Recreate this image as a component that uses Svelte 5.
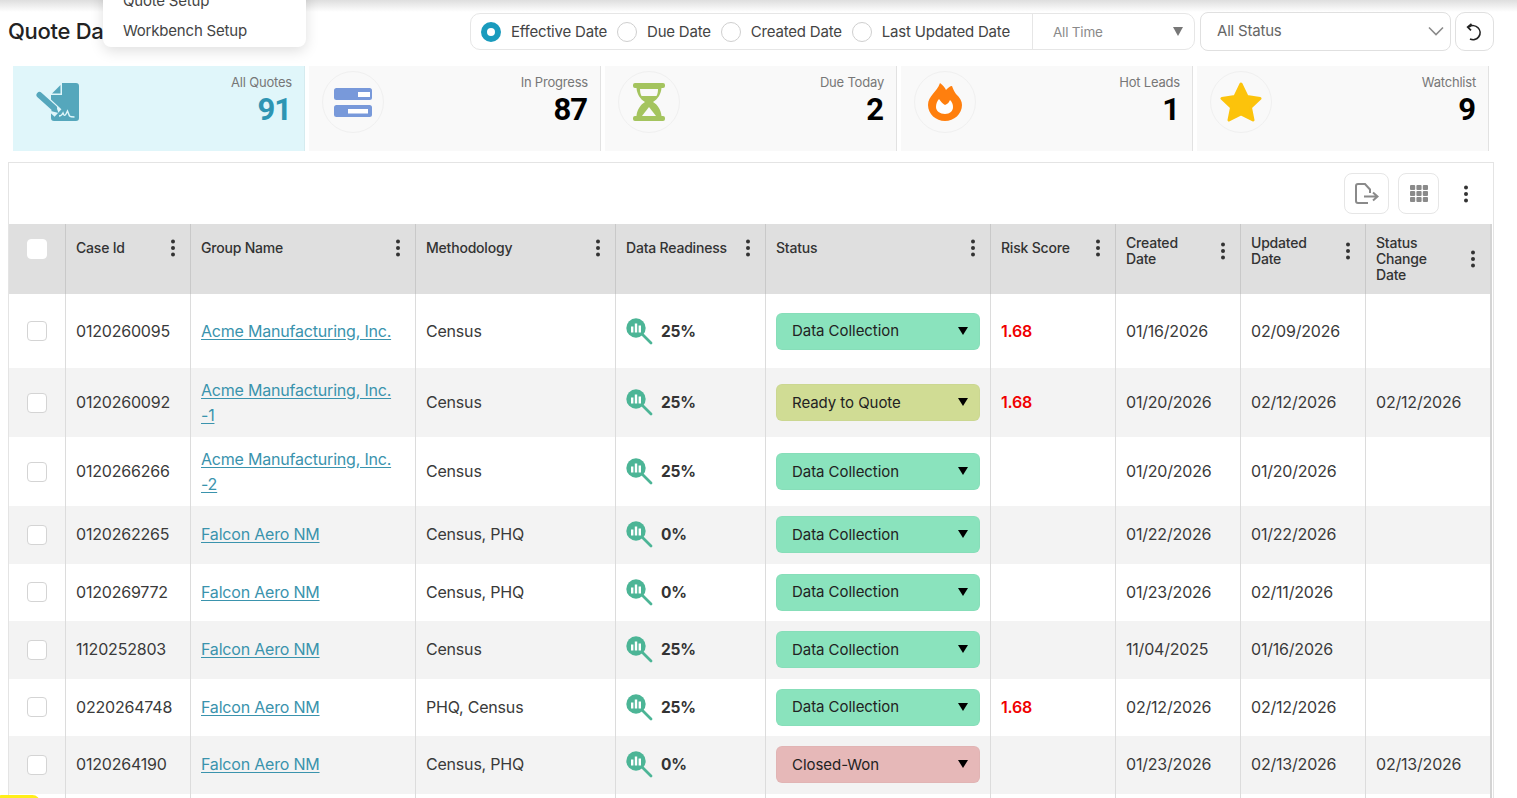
<script>
  const dateOptions = [
    { label: 'Effective Date', on: true },
    { label: 'Due Date', on: false },
    { label: 'Created Date', on: false },
    { label: 'Last Updated Date', on: false }
  ];
  const stats = [
    { label: 'All Quotes', value: '91', icon: 'doc', active: true },
    { label: 'In Progress', value: '87', icon: 'bars' },
    { label: 'Due Today', value: '2', icon: 'glass' },
    { label: 'Hot Leads', value: '1', icon: 'flame' },
    { label: 'Watchlist', value: '9', icon: 'star' }
  ];
  const cols = [
    { label: 'Case Id', c: 'c-nowrap' },
    { label: 'Group Name', c: 'c-nowrap' },
    { label: 'Methodology', c: 'c-nowrap' },
    { label: 'Data Readiness', c: 'c-nowrap' },
    { label: 'Status', c: 'c-nowrap' },
    { label: 'Risk Score', c: 'c-nowrap' },
    { label: 'Created Date', c: 'c-date' },
    { label: 'Updated Date', c: 'c-date' },
    { label: 'Status Change Date', c: 'c-date' }
  ];
  const rows = [
    { id: '0120260095', group: 'Acme Manufacturing, Inc.', meth: 'Census', ready: '25%', status: 'Data Collection', risk: '1.68', created: '01/16/2026', updated: '02/09/2026', changed: '', h: 'h-first' },
    { id: '0120260092', group: 'Acme Manufacturing, Inc. -1', meth: 'Census', ready: '25%', status: 'Ready to Quote', risk: '1.68', created: '01/20/2026', updated: '02/12/2026', changed: '02/12/2026', h: 'h-two' },
    { id: '0120266266', group: 'Acme Manufacturing, Inc. -2', meth: 'Census', ready: '25%', status: 'Data Collection', risk: '', created: '01/20/2026', updated: '01/20/2026', changed: '', h: 'h-two' },
    { id: '0120262265', group: 'Falcon Aero NM', meth: 'Census, PHQ', ready: '0%', status: 'Data Collection', risk: '', created: '01/22/2026', updated: '01/22/2026', changed: '', h: 'h-one' },
    { id: '0120269772', group: 'Falcon Aero NM', meth: 'Census, PHQ', ready: '0%', status: 'Data Collection', risk: '', created: '01/23/2026', updated: '02/11/2026', changed: '', h: 'h-one' },
    { id: '1120252803', group: 'Falcon Aero NM', meth: 'Census', ready: '25%', status: 'Data Collection', risk: '', created: '11/04/2025', updated: '01/16/2026', changed: '', h: 'h-one' },
    { id: '0220264748', group: 'Falcon Aero NM', meth: 'PHQ, Census', ready: '25%', status: 'Data Collection', risk: '1.68', created: '02/12/2026', updated: '02/12/2026', changed: '', h: 'h-one' },
    { id: '0120264190', group: 'Falcon Aero NM', meth: 'Census, PHQ', ready: '0%', status: 'Closed-Won', risk: '', created: '01/23/2026', updated: '02/13/2026', changed: '02/13/2026', h: 'h-one' }
  ];
  const statusClass = { 'Data Collection': 's-data', 'Ready to Quote': 's-ready', 'Closed-Won': 's-won' };
</script>

{#snippet kebab()}
  <svg class="kebab" viewBox="0 0 6 20" width="6" height="20" aria-hidden="true">
    <circle cx="3" cy="3.500" r="2" /><circle cx="3" cy="10" r="2" /><circle cx="3" cy="16.500" r="2" />
  </svg>
{/snippet}

{#snippet statIcon(name)}
  {#if name === 'doc'}
    <svg viewBox="14 10 44 44" width="44" height="44" aria-hidden="true">
      <path fill="#55a7bc" d="M41 13H55a3 3 0 0 1 3 3V48a3 3 0 0 1-3 3H33a3 3 0 0 1-3-3V25H41Z" />
      <path fill="#55a7bc" d="M39.500 15V23.500H31Z" />
      <path fill="none" stroke="#e0f6fa" stroke-width="10" d="M22 29 37 43" />
      <path fill="none" stroke="#55a7bc" stroke-width="6" stroke-linecap="round" d="M18.500 25 33 38" />
      <path fill="#55a7bc" d="M30 41 37.500 43 35 36Z" />
      <path fill="none" stroke="#e0f6fa" stroke-width="1.400" d="M38 46c2 0 3-1 4-3 1 3 2 3 3 1l1.500-3 2 5c1 1 3 1 5 1" />
    </svg>
  {:else if name === 'bars'}
    <svg viewBox="0 0 38 29" width="38" height="29" aria-hidden="true">
      <rect width="38" height="12" rx="2.500" fill="#7899da" />
      <rect y="17" width="38" height="12" rx="2.500" fill="#7899da" />
      <rect x="24" y="4" width="12" height="5" fill="#fff" />
      <rect x="14" y="21" width="20" height="4.500" fill="#fff" />
    </svg>
  {:else if name === 'glass'}
    <svg viewBox="0 0 32 38" width="32" height="38" aria-hidden="true">
      <path fill="#a4c45e" d="M2 0H30a2 2 0 0 1 2 2V3a2 2 0 0 1-2 2H28.500C28 11 25 16 20 19 25 22 28 27 28.500 33H30a2 2 0 0 1 2 2V36a2 2 0 0 1-2 2H2a2 2 0 0 1-2-2V35a2 2 0 0 1 2-2H3.500C4 27 7 22 12 19 7 16 4 11 3.500 5H2a2 2 0 0 1-2-2V2A2 2 0 0 1 2 0Z" />
      <path fill="#f9f9f9" d="M7 6H25C25 9 24.500 11 23.500 13H8.500C7.500 11 7 9 7 6Z" />
      <path fill="#f9f9f9" d="M16 24 23 33H9Z" />
    </svg>
  {:else if name === 'flame'}
    <svg viewBox="0 0 34 38" width="34" height="38" aria-hidden="true">
      <path fill="#ff7f0e" d="M12 0C15 2 17 5 18 7 20 5 22 3 24 3 25 6 26 8 28 11 32 15 34 18 34 22 34 31 26 38 17 38 8 38 0 31 0 22 0 13 9 9 12 0Z" />
      <path fill="#fff" d="M11 16C13 19 15 21 17 22 20 21 21 19 22 17 24 19 25 21 25 24 25 28 22 31 17 31 12 31 8 28 8 24 8 21 9 18 11 16Z" />
    </svg>
  {:else}
    <svg viewBox="0 0 42 40" width="42" height="40" aria-hidden="true">
      <path fill="#fcc30b" stroke="#fcc30b" stroke-width="3" stroke-linejoin="round" d="M21 2 27 14.500 40 16.500 30.500 25.500 33 38 21 32 9 38 11.500 25.500 2 16.500 15 14.500Z" />
    </svg>
  {/if}
{/snippet}

<div class="page">
  <div class="top-shadow"></div>

  <header class="head">
    <h1>Quote Dashboard</h1>
    <div class="menu">
      <div class="menu-item">Quote Setup</div>
      <div class="menu-item">Workbench Setup</div>
    </div>
    <div class="filters">
      <div class="date-box">
        {#each dateOptions as o}
          <span class="radio-opt">
            <span class="radio" class:on={o.on}></span>{o.label}
          </span>
        {/each}
        <div class="time">
          <span>All Time</span>
          <svg viewBox="0 0 10 9" width="10" height="9" aria-hidden="true"><path d="M0 0H10L5 9Z" fill="#777" /></svg>
        </div>
      </div>
      <div class="status-box">
        <span>All Status</span>
        <svg viewBox="0 0 16 10" width="16" height="10" aria-hidden="true"><path d="M1 1.500 8 8.500 15 1.500" fill="none" stroke="#8a8a8a" stroke-width="1.600" /></svg>
      </div>
      <button class="reset" aria-label="Reset">
        <svg viewBox="10 9 20 20" width="20" height="20" aria-hidden="true" fill="none" stroke="#222" stroke-width="1.700">
          <path d="M14 14A7 7 0 1 1 15 26" />
          <path d="M16.500 10.800 12.700 14 16 17.300" />
        </svg>
      </button>
    </div>
  </header>

  <section class="stats">
    {#each stats as s}
      <div class="stat" class:active={s.active}>
        <div class="circle">{@render statIcon(s.icon)}</div>
        <div class="stat-text">
          <div class="stat-label">{s.label}</div>
          <div class="stat-value">{s.value}</div>
        </div>
      </div>
    {/each}
  </section>

  <section class="card">
    <div class="toolbar">
      <button class="tool wide" aria-label="Export">
        <svg viewBox="0 0 24 21" width="24" height="21" aria-hidden="true" fill="none" stroke="#8a8a8a" stroke-width="2">
          <path d="M13 20H3a2 2 0 0 1-2-2V3a2 2 0 0 1 2-2H10L15 6.500V10" />
          <path d="M9 13.500H22M18 9.500 22.500 13.500 18 17.500" />
        </svg>
      </button>
      <button class="tool" aria-label="Columns">
        <svg viewBox="0 0 18 17" width="18" height="17" aria-hidden="true" fill="#8a8a8a">
          <rect width="5.200" height="5" rx="1" /><rect x="6.400" width="5.200" height="5" rx="1" /><rect x="12.800" width="5.200" height="5" rx="1" />
          <rect y="6" width="5.200" height="5" rx="1" /><rect x="6.400" y="6" width="5.200" height="5" rx="1" /><rect x="12.800" y="6" width="5.200" height="5" rx="1" />
          <rect y="12" width="5.200" height="5" rx="1" /><rect x="6.400" y="12" width="5.200" height="5" rx="1" /><rect x="12.800" y="12" width="5.200" height="5" rx="1" />
        </svg>
      </button>
      <span class="tool-more">{@render kebab()}</span>
    </div>

    <table>
      <colgroup>
        <col class="w-check" /><col class="w-125" /><col class="w-225" /><col class="w-200" /><col class="w-150" /><col class="w-225" /><col class="w-125" /><col class="w-125" /><col class="w-125" /><col class="w-last" />
      </colgroup>
      <thead>
        <tr>
          <th class="check-h"><span class="box head-box"></span></th>
          {#each cols as c}
            <th><div class="th-in"><span class={c.c}>{c.label}</span>{@render kebab()}</div></th>
          {/each}
        </tr>
      </thead>
      <tbody>
        {#each rows as r, i}
          <tr class={r.h} class:alt={i % 2 === 1}>
            <td class="check"><span class="box"></span></td>
            <td>{r.id}</td>
            <td><a href="#top">{r.group}</a></td>
            <td>{r.meth}</td>
            <td>
              <div class="ready">
                <svg viewBox="0 0 27 27" width="27" height="27" aria-hidden="true">
                  <circle cx="10" cy="10" r="9.700" fill="#4cb596" />
                  <path d="M16.500 16.500 25 25" stroke="#4cb596" stroke-width="2.800" stroke-linecap="round" />
                  <rect x="5" y="8.500" width="2.400" height="6" fill="#fff" /><rect x="8.800" y="5.500" width="2.400" height="9" fill="#fff" /><rect x="12.600" y="7.500" width="2.400" height="7" fill="#fff" />
                </svg>
                <b>{r.ready}</b>
              </div>
            </td>
            <td>
              <div class="status {statusClass[r.status]}">
                <span>{r.status}</span>
                <svg viewBox="0 0 10 8" width="10" height="8" aria-hidden="true"><path d="M0 0H10L5 8Z" fill="#000" /></svg>
              </div>
            </td>
            <td class="risk">{r.risk}</td>
            <td>{r.created}</td>
            <td>{r.updated}</td>
            <td>{r.changed}</td>
          </tr>
        {/each}
        <tr class="h-one">
          {#each Array(10) as _}<td></td>{/each}
        </tr>
      </tbody>
    </table>
  </section>

  <div class="yellow"></div>
</div>

<style>
  :global(body) { margin: 0; background: #fff; }
  .page {
    position: relative;
    width: 1517px;
    height: 798px;
    overflow: hidden;
    background: #fff;
    font-family: Inter, "Noto Sans", "Liberation Sans", sans-serif;
    color: #333;
  }
  .top-shadow {
    height: 12px;
    background: linear-gradient(#dedede, #fff);
  }
  .head {
    position: relative;
    display: flex;
    align-items: center;
    justify-content: space-between;
    height: 39px;
    padding: 0 23px 0 8px;
  }
  h1 {
    margin: 0 0 2px;
    font-size: 22px;
    line-height: 36px;
    font-weight: 500;
    color: #222;
    letter-spacing: -0.3px;
  }
  .menu {
    position: absolute;
    left: 103px;
    top: -42px;
    width: 203px;
    height: 77px;
    box-sizing: border-box;
    padding-top: 16px;
    background: #fff;
    border-radius: 0 0 8px 8px;
    box-shadow: 0 4px 14px rgba(0, 0, 0, 0.13);
    font-size: 15px;
    color: #444;
    overflow: hidden;
  }
  .menu-item { padding: 0 20px; line-height: 30px; letter-spacing: -0.2px; white-space: nowrap; }
  .filters { display: flex; gap: 5px; align-items: center; }
  .date-box {
    display: flex;
    align-items: center;
    width: 725px;
    height: 37px;
    box-sizing: border-box;
    border: 1px solid #e6e6e6;
    border-radius: 10px;
    padding-left: 10px;
    font-size: 15px;
    letter-spacing: -0.2px;
    color: #444;
  }
  .radio-opt { display: inline-flex; align-items: center; gap: 10px; margin-right: 10px; white-space: nowrap; }
  .radio {
    width: 20px;
    height: 20px;
    box-sizing: border-box;
    border: 1px solid #cfcfcf;
    border-radius: 50%;
    background: #fff;
  }
  .radio.on { border: 6px solid #1a9bbd; }
  .time {
    margin-left: auto;
    align-self: stretch;
    width: 162px;
    box-sizing: border-box;
    border-left: 1px solid #e6e6e6;
    display: flex;
    align-items: center;
    justify-content: space-between;
    padding: 0 11px 0 20px;
    color: #8a8a8a;
    font-size: 13.500px;
  }
  .status-box {
    width: 251px;
    height: 39px;
    box-sizing: border-box;
    border: 1px solid #e0e0e0;
    border-radius: 8px;
    display: flex;
    align-items: center;
    justify-content: space-between;
    padding: 0 6px 2px 16px;
    font-size: 15px;
    color: #666;
    letter-spacing: -0.2px;
  }
  .reset {
    width: 39px;
    height: 39px;
    margin-left: -1px;
    padding: 0;
    border: 1px solid #e0e0e0;
    border-radius: 10px;
    background: #fff;
    display: flex;
    align-items: center;
    justify-content: center;
  }
  .stats {
    display: flex;
    gap: 4px;
    margin: 15px 0 0 13px;
  }
  .stat {
    width: 292px;
    height: 85px;
    box-sizing: border-box;
    background: #f9f9f9;
    border-right: 1px solid #e2e2e2;
    display: flex;
    justify-content: space-between;
    padding: 5px 12px 0 13px;
  }
  .stat.active { background: #e0f6fa; border-right-color: #d5ebef; }
  .circle {
    width: 62px;
    height: 62px;
    box-sizing: border-box;
    border: 1px solid #f0f0f0;
    border-radius: 50%;
    display: flex;
    align-items: center;
    justify-content: center;
  }
  .active .circle { border-color: transparent; }
  .stat-text { text-align: right; padding-top: 3px; }
  .stat-label { font-size: 13px; line-height: 16px; color: #777; letter-spacing: -0.2px; }
  .stat-value {
    font-family: Roboto, "Liberation Sans", sans-serif;
    font-size: 31px;
    line-height: 37px;
    padding: 1px 1px 0 0;
    font-weight: 700;
    color: #000;
    letter-spacing: -1px;
  }
  .active .stat-value { color: #2e95b3; }
  .card {
    margin: 11px 23px 0 8px;
    border: 1px solid #e4e4e4;
    border-bottom: none;
    background: #fff;
  }
  .toolbar {
    height: 61px;
    display: flex;
    align-items: center;
    justify-content: flex-end;
    padding-right: 24px;
  }
  .tool {
    width: 41px;
    height: 41px;
    margin-right: 9px;
    padding: 0;
    background: #fff;
    border: 1px solid #e6e6e6;
    border-radius: 8px;
    display: flex;
    align-items: center;
    justify-content: center;
  }
  .tool.wide { width: 45px; }
  .tool-more { margin-left: 15px; display: flex; }
  table {
    width: 1483px;
    table-layout: fixed;
    border-collapse: separate;
    border-spacing: 0;
    font-size: 16px;
    letter-spacing: -0.2px;
    border-right: 2px solid #d4d4d4;
  }
  .w-check { width: 57px; }
  .w-125 { width: 125px; }
  .w-225 { width: 225px; }
  .w-200 { width: 200px; }
  .w-150 { width: 150px; }
  .w-last { width: 124px; }
  th {
    height: 70px;
    box-sizing: border-box;
    padding: 11px 14px 0 10px;
    vertical-align: top;
    text-align: left;
    background: #dfdfdf;
    border-right: 1px solid #c9c9c9;
    font-size: 14px;
    font-weight: 500;
    line-height: 16px;
    color: #333;
  }
  th:last-child { border-right: none; }
  .check-h { padding: 15px 0 0; text-align: center; }
  .th-in {
    display: flex;
    align-items: center;
    justify-content: space-between;
    min-height: 26px;
  }
  .c-nowrap { white-space: nowrap; }
  .c-date { max-width: 62px; }
  .kebab { fill: #333; flex: none; }
  td {
    box-sizing: border-box;
    padding: 0 10px;
    border-right: 1px solid #dcdcdc;
    line-height: 25px;
    color: #3a3a3a;
    vertical-align: middle;
  }
  td:last-child { border-right: none; }
  .h-first td { height: 74px; }
  .h-two td { height: 69px; }
  .h-one td { height: 57.500px; }
  .alt td { background: #f3f3f3; }
  .check { padding: 0; text-align: center; }
  .box {
    display: inline-block;
    width: 20px;
    height: 20px;
    margin-bottom: 2px;
    box-sizing: border-box;
    vertical-align: middle;
    background: #fff;
    border: 1px solid #d4d4d4;
    border-radius: 4px;
  }
  .head-box { border-color: #fff; }
  a { color: #3a93ad; text-decoration: underline; text-underline-offset: 2px; }
  .ready { display: flex; align-items: center; gap: 8px; }
  .ready svg { flex: none; }
  .ready b { font-size: 15.500px; font-weight: 700; color: #333; }
  .status {
    width: 204px;
    height: 37px;
    box-sizing: border-box;
    border-radius: 6px;
    border: 1px solid rgba(0, 0, 0, 0.02);
    display: flex;
    align-items: center;
    justify-content: space-between;
    padding: 0 11px 1px 15px;
    font-size: 15px;
    letter-spacing: -0.05px;
    color: #222;
  }
  .s-data { background: #8ae3bd; }
  .s-ready { background: #d0dc94; }
  .s-won { background: #e6b8b8; }
  .risk { color: #f00000; font-weight: 600; }
  .yellow {
    position: absolute;
    left: -6px;
    bottom: -12px;
    width: 46px;
    height: 15px;
    border-radius: 12px;
    background: #ffee1a;
  }
</style>
